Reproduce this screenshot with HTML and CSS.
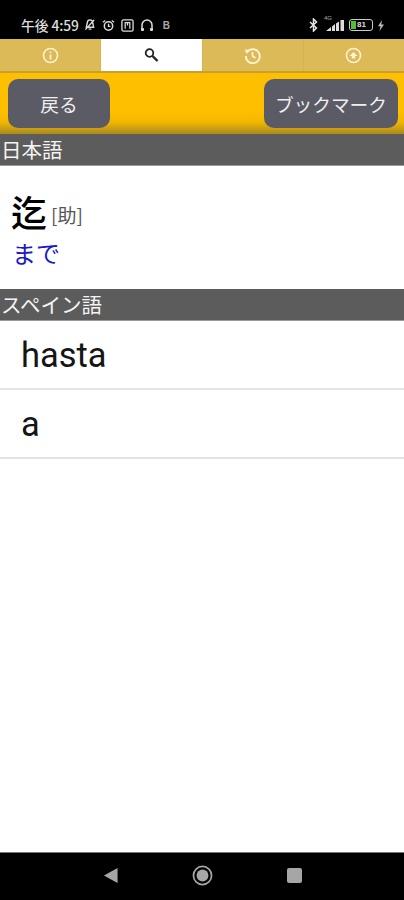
FILE: index.html
```html
<!DOCTYPE html>
<html lang="ja">
<head>
    <meta charset="UTF-8">
    <meta name="viewport" content="width=device-width, initial-scale=1.0">
    <title>辞書</title>
    <link rel="stylesheet" href="styles.css">
</head>
<body>
    <div class="phone">
        <div class="status-bar">
            <div class="status-left">
                <span class="clock">午後 4:59</span>
                <!-- muted bell -->
                <svg width="12" height="14" viewBox="0 0 13 14"><path d="M6.500 1.500C4.500 1.500 3.500 3 3.500 5L2.500 9.500H10.500L9.500 5C9.500 3 8.500 1.500 6.500 1.500ZM1.500 12L11 1.500M5 11.500H8" fill="none" stroke="#ddd" stroke-width="1.500"/></svg>
                <!-- alarm -->
                <svg width="13" height="13" viewBox="0 0 14 14"><circle cx="7" cy="7.500" r="4.500" fill="none" stroke="#ddd" stroke-width="1.600"/><path d="M1 3.500L3.500 1.500M13 3.500L10.500 1.500M7 5V8H9" fill="none" stroke="#ddd" stroke-width="1.400"/></svg>
                <!-- nfc -->
                <svg width="13" height="13" viewBox="0 0 14 14"><rect x="1" y="1" width="12" height="12" rx="1.500" fill="none" stroke="#ddd" stroke-width="1.400"/><path d="M4.500 10.500V3.800H9.500V10.500M7 7V3.800" fill="none" stroke="#ddd" stroke-width="1.300"/></svg>
                <!-- headphones -->
                <svg width="14" height="14" viewBox="0 0 14 14"><path d="M2 11V7A5 5 0 0 1 12 7V11" fill="none" stroke="#ddd" stroke-width="1.500"/><rect x="1" y="10" width="3" height="3" rx="1" fill="#ddd"/><rect x="10" y="10" width="3" height="3" rx="1" fill="#ddd"/></svg>
                <span class="status-b">B</span>
            </div>
            <div class="status-right">
                <!-- bluetooth -->
                <svg width="9" height="14" viewBox="0 0 9 14"><path d="M1 4L7.500 10L4.500 13V1L7.500 4L1 10" fill="none" stroke="#e6e6e6" stroke-width="1.500"/></svg>
                <!-- signal -->
                <div class="signal">
                    <span class="signal-label">4G</span>
                    <svg width="20" height="11" viewBox="0 0 20 11"><path d="M2 11L7 7V11ZM8 6.500L11 4V11H8ZM12 3.500L15 1.500V11H12ZM16.500 0H20V11H16.500Z" fill="#ddd"/></svg>
                </div>
                <!-- battery -->
                <div class="battery">
                    <span class="battery-fill"></span>
                    <span class="battery-num">81</span>
                </div>
                <svg width="6" height="11" viewBox="0 0 6 11"><path d="M4 0L0 6.200H2.500L1.500 11L6 4.500H3.300Z" fill="#bbb"/></svg>
            </div>
        </div>

        <div class="tabs">
            <div class="tab">
                <svg width="17" height="17" viewBox="0 0 17 17"><circle cx="8.500" cy="8.500" r="7" fill="none" stroke="#fbf3d6" stroke-width="1.600"/><path d="M8.500 7.500V12.500M8.500 4.500V6" stroke="#fbf3d6" stroke-width="1.800"/></svg>
            </div>
            <div class="tab active">
                <svg width="16" height="16" viewBox="0 0 16 16"><circle cx="6.500" cy="6" r="3.800" fill="none" stroke="#222" stroke-width="1.800"/><path d="M9.500 9L14.500 14" stroke="#222" stroke-width="2.400"/></svg>
            </div>
            <div class="tab">
                <svg width="17" height="17" viewBox="0 0 17 17"><path d="M3.200 5A7 7 0 1 1 1.800 9" fill="none" stroke="#fbf3d6" stroke-width="1.900"/><path d="M0.800 2.500L6 3L2.500 7Z" fill="#fbf3d6"/><path d="M8.500 5V9L11.500 11" fill="none" stroke="#fbf3d6" stroke-width="1.800"/></svg>
            </div>
            <div class="tab">
                <svg width="17" height="17" viewBox="0 0 17 17"><circle cx="8.500" cy="8.500" r="7" fill="none" stroke="#fbf3d6" stroke-width="1.600"/><path d="M4.500 9L8.500 5L12.500 9H10.200V11.500H6.800V9Z" fill="#fbf3d6"/></svg>
            </div>
        </div>

        <div class="toolbar">
            <button class="tool-btn back-btn">戻る</button>
            <button class="tool-btn">ブックマーク</button>
        </div>

        <div class="section-head">日本語</div>
        <div class="entry">
            <div class="entry-word">
                <span class="headword">迄</span>
                <span class="pos">[助]</span>
            </div>
            <div class="reading">まで</div>
        </div>

        <div class="section-head">スペイン語</div>
        <ul class="results">
            <li>hasta</li>
            <li>a</li>
        </ul>

        <div class="nav-bar">
            <svg width="15" height="17" viewBox="0 0 16 18"><path d="M15.500 1V17L1 9Z" fill="#a6a6a6"/></svg>
            <svg width="21" height="21" viewBox="0 0 22 22"><circle cx="11" cy="11" r="9.500" fill="none" stroke="#a6a6a6" stroke-width="1.800"/><circle cx="11" cy="11" r="6.200" fill="#a6a6a6"/></svg>
            <span class="nav-square"></span>
        </div>
    </div>
</body>
</html>
```

FILE: styles.css
```css
* {
    margin: 0;
    padding: 0;
    box-sizing: border-box;
}

body {
    font-family: "Noto Sans CJK JP", "Noto Sans", sans-serif;
    background: #fff;
    color: #111;
    overflow: hidden;
}

.phone {
    display: flex;
    flex-direction: column;
    height: 900px;
}

.status-bar {
    height: 39px;
    background: #000;
    display: flex;
    align-items: center;
    justify-content: space-between;
    padding: 11px 20px 0 21px;
    color: #ddd;
}

.status-left {
    display: flex;
    align-items: center;
    gap: 6px;
}

.clock {
    font-size: 13.800px;
    font-weight: 500;
    letter-spacing: -0.100px;
    margin-right: -1px;
}

.status-b {
    font-size: 10px;
    font-family: "Liberation Sans", sans-serif;
    font-weight: bold;
    margin-left: 3px;
    color: #aaa;
}

.status-right {
    display: flex;
    align-items: center;
    gap: 4px;
}

.signal {
    position: relative;
    width: 22px;
    height: 11px;
    display: flex;
    justify-content: flex-end;
}

.signal-label {
    position: absolute;
    top: -5px;
    left: 2px;
    font-size: 6px;
    color: #aaa;
    font-family: "Liberation Sans", sans-serif;
}

.battery {
    width: 24px;
    height: 12px;
    margin-left: 1px;
    margin-right: 1px;
    border: 1.500px solid #ccc;
    border-radius: 3px;
    display: flex;
    align-items: center;
    padding-left: 1px;
    gap: 1px;
}

.battery-fill {
    width: 5px;
    height: 8px;
    background: #55c02c;
}

.battery-num {
    font-size: 8px;
    line-height: 8px;
    font-family: "Liberation Sans", sans-serif;
    font-weight: bold;
    color: #ddd;
}

.tabs {
    height: 34px;
    display: grid;
    grid-template-columns: repeat(4, 1fr);
    gap: 1px;
    background: #d8b24a;
    border-bottom: 2px solid #c9a02b;
}

.tab {
    background: #dcba57;
    display: flex;
    align-items: center;
    justify-content: center;
}

.tab.active {
    background: #fff;
}

.toolbar {
    height: 61px;
    background: linear-gradient(#fdbf00 0%, #fdbf00 60%, #f4b800 80%, #a98a20 100%);
    display: flex;
    align-items: center;
    justify-content: space-between;
    padding: 0 6px 0 8px;
}

.tool-btn {
    height: 49px;
    padding: 0 11px;
    background: #5a5b64;
    color: #eee;
    border: none;
    border-radius: 10px;
    font-family: inherit;
    font-size: 18.700px;
}

.back-btn {
    width: 102px;
}

.section-head {
    height: 32px;
    background: #5c5c5c;
    color: #f4f4f4;
    font-size: 20.500px;
    line-height: 30px;
    padding-left: 1px;
    border-bottom: 1px solid #999;
}

.entry {
    height: 123px;
    padding: 20px 11px 0;
}

.entry-word {
    display: flex;
    align-items: flex-end;
    height: 50px;
    gap: 4px;
}

.headword {
    font-size: 36px;
    font-weight: 500;
    line-height: 50px;
    color: #000;
}

.pos {
    font-size: 19px;
    line-height: 42px;
    color: #555;
}

.reading {
    font-size: 24px;
    line-height: 34px;
    padding-left: 1px;
    color: #1a1ac8;
}

.results {
    list-style: none;
}

.results li {
    height: 69px;
    padding-left: 21px;
    font-family: Roboto, sans-serif;
    font-size: 34.500px;
    line-height: 68px;
    color: #151515;
    border-bottom: 2px solid #e4e4e4;
}

.nav-bar {
    margin-top: auto;
    height: 48px;
    padding-bottom: 2px;
    background: #000;
    border-top: 1px solid #777;
    display: flex;
    align-items: center;
    justify-content: center;
    gap: 74px;
}

.nav-square {
    width: 15px;
    height: 15px;
    border-radius: 2px;
    background: #a6a6a6;
}
```
